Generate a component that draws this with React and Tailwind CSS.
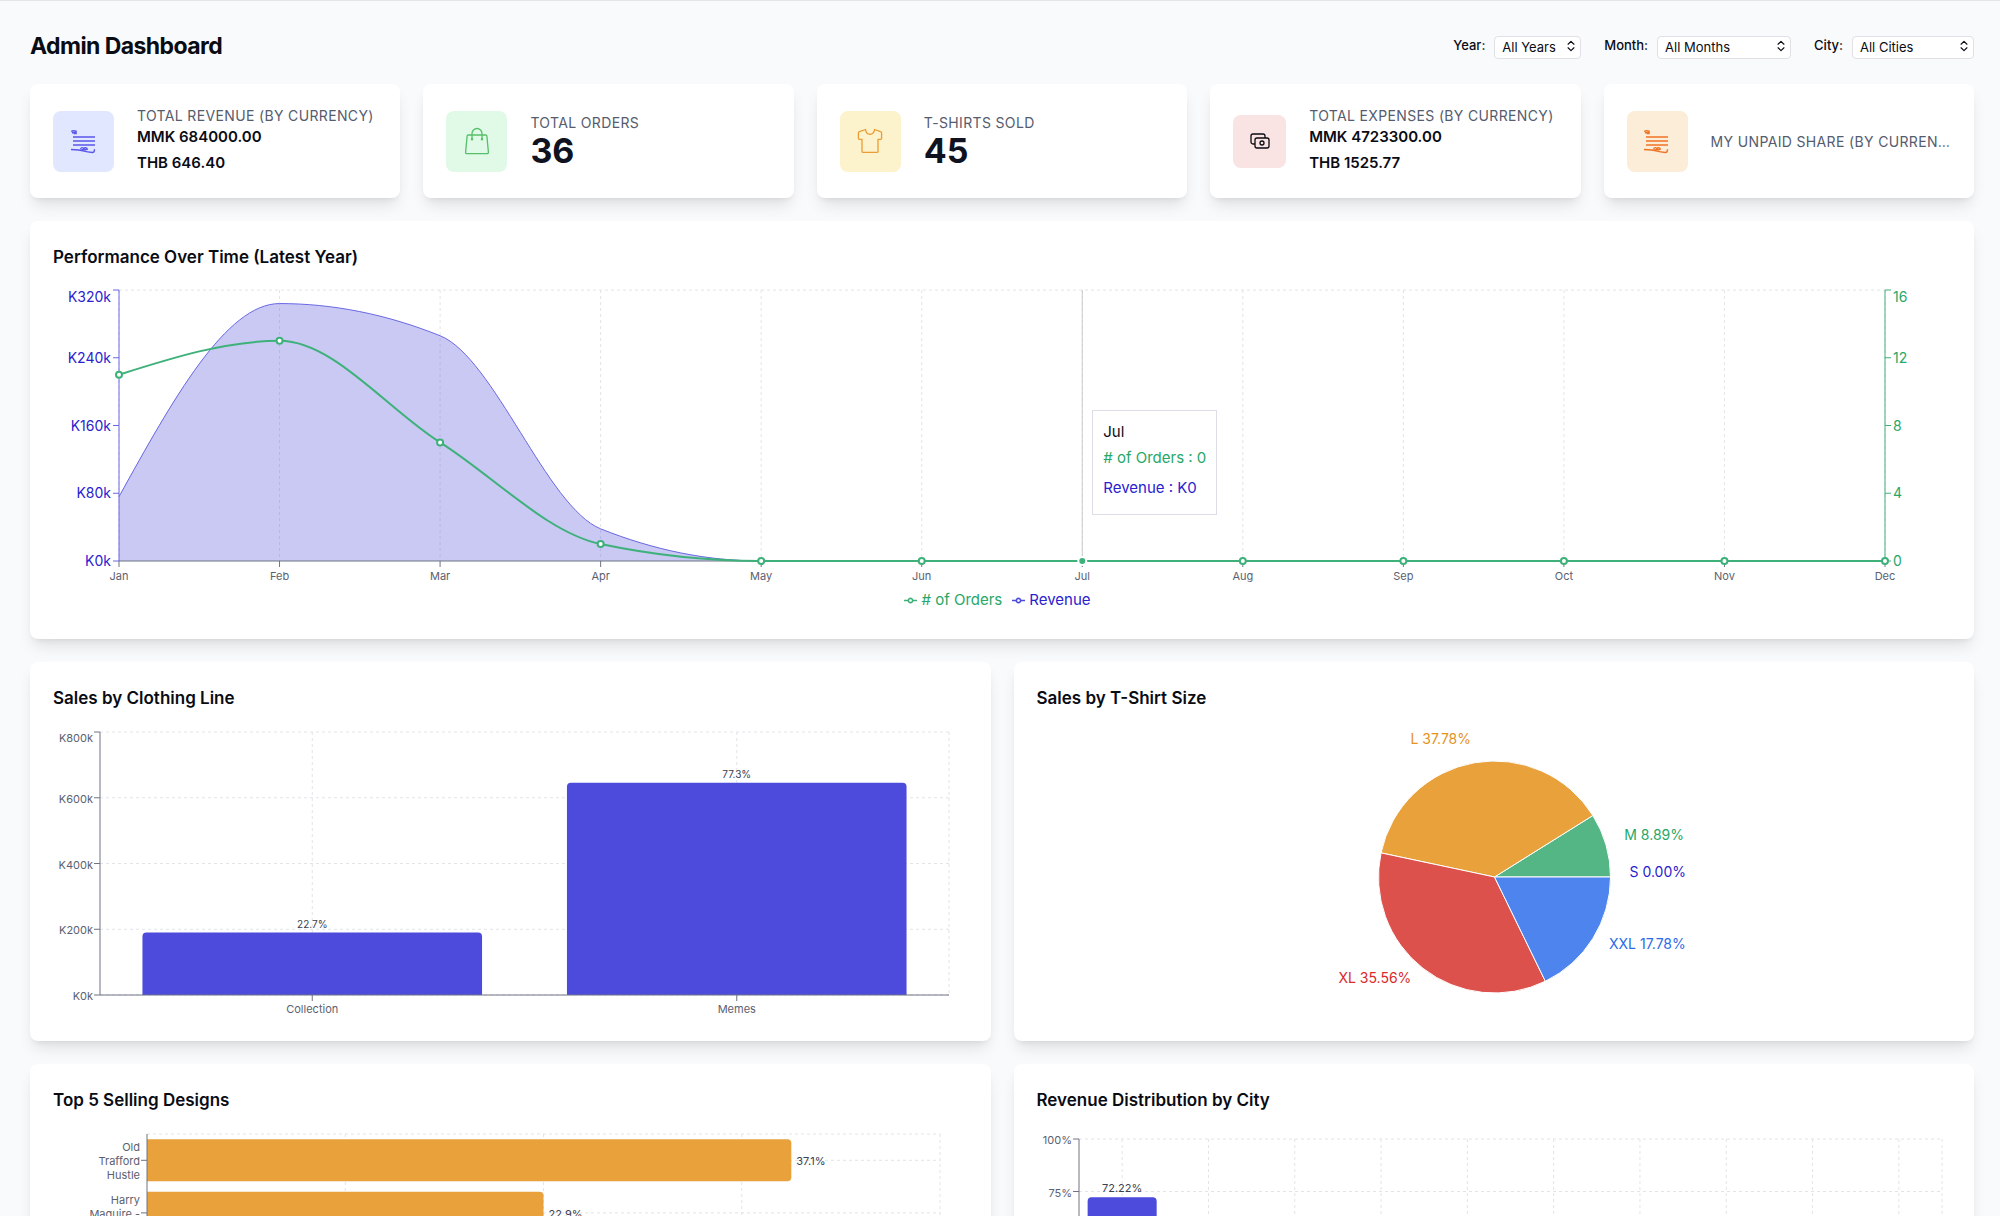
import { useLayoutEffect, useRef, useState } from "react";
import { ChevronsUpDown } from "lucide-react";

const INDIGO = "#4c4bdc";
const GREEN = "#3eb17a";
const AMBER = "#e8a13b";
const AXIS = "#6f7484";
const GRID = "#e3e4e8";

const monthly = [
  { month: "Jan", revenue: 76, orders: 11 },
  { month: "Feb", revenue: 304, orders: 13 },
  { month: "Mar", revenue: 266, orders: 7 },
  { month: "Apr", revenue: 38, orders: 1 },
  { month: "May", revenue: 0, orders: 0 },
  { month: "Jun", revenue: 0, orders: 0 },
  { month: "Jul", revenue: 0, orders: 0 },
  { month: "Aug", revenue: 0, orders: 0 },
  { month: "Sep", revenue: 0, orders: 0 },
  { month: "Oct", revenue: 0, orders: 0 },
  { month: "Nov", revenue: 0, orders: 0 },
  { month: "Dec", revenue: 0, orders: 0 },
];

const clothingLines = [
  { name: "Collection", revenue: 190, share: "22.7%" },
  { name: "Memes", revenue: 646, share: "77.3%" },
];

const sizes = [
  { name: "S", count: 0, share: "0.00%", color: INDIGO, text: "#2a22cf" },
  { name: "M", count: 4, share: "8.89%", color: "#55b685", text: "#27a768" },
  { name: "L", count: 17, share: "37.78%", color: AMBER, text: "#e6921c" },
  { name: "XL", count: 16, share: "35.56%", color: "#dc514c", text: "#d92b2b" },
  { name: "XXL", count: 8, share: "17.78%", color: "#4d84ee", text: "#2b6ce8" },
];

const designs = [
  { lines: ["Old", "Trafford", "Hustle"], sold: 13, share: "37.1%" },
  { lines: ["Harry", "Maguire -"], sold: 8, share: "22.9%" },
];

const cities = [{ percent: 72.22 }];

// Track the width of the chart container
const useWidth = () => {
  const ref = useRef(null);
  const [width, setWidth] = useState(0);

  useLayoutEffect(() => {
    const update = () => setWidth(ref.current.clientWidth);
    update();
    const observer = new ResizeObserver(update);
    observer.observe(ref.current);
    return () => observer.disconnect();
  }, []);

  return [ref, width];
};

// Monotone cubic curve through the points
const curve = (pts) => {
  const n = pts.length;
  const h = (i) => pts[i + 1][0] - pts[i][0];
  const s = (i) => (pts[i + 1][1] - pts[i][1]) / h(i);
  const m = pts.map((_, i) => {
    if (i === 0 || i === n - 1) return null;
    const s0 = s(i - 1);
    const s1 = s(i);
    const p = (s0 * h(i) + s1 * h(i - 1)) / (h(i - 1) + h(i));
    return (
      (Math.sign(s0) + Math.sign(s1)) *
        Math.min(Math.abs(s0), Math.abs(s1), 0.5 * Math.abs(p)) || 0
    );
  });
  m[0] = (3 * s(0) - m[1]) / 2;
  m[n - 1] = (3 * s(n - 2) - m[n - 2]) / 2;

  let d = `M${pts[0][0]},${pts[0][1]}`;
  for (let i = 0; i < n - 1; i++) {
    const dx = h(i) / 3;
    const [x0, y0] = pts[i];
    const [x1, y1] = pts[i + 1];
    d += `C${x0 + dx},${y0 + dx * m[i]},${x1 - dx},${y1 - dx * m[i + 1]},${x1},${y1}`;
  }
  return d;
};

const HLine = ({ x1, x2, y, color = GRID, dashed }) => (
  <line x1={x1} x2={x2} y1={y} y2={y} stroke={color} strokeDasharray={dashed ? "3 3" : undefined} />
);

const VLine = ({ x, y1, y2, color = GRID, dashed }) => (
  <line x1={x} x2={x} y1={y1} y2={y2} stroke={color} strokeDasharray={dashed ? "3 3" : undefined} />
);

const Card = ({ title, children }) => (
  <section className="min-w-0 rounded-lg bg-white p-[23px] shadow-lg">
    <h2 className="mb-[15px] text-[17px] leading-[27px] font-semibold">{title}</h2>
    {children}
  </section>
);

const LegendItem = ({ color, className, label }) => (
  <li className={`flex items-center gap-1 ${className}`}>
    <svg width="13" height="13" viewBox="0 0 32 32" fill="none" stroke={color} strokeWidth="4">
      <path d="M0,16h10.67A5.33,5.33,0,1,1,21.33,16H32M21.33,16A5.33,5.33,0,1,1,10.67,16" />
    </svg>
    {label}
  </li>
);

const PerformanceChart = () => {
  const [ref, width] = useWidth();
  const left = 66;
  const right = width - 66;
  const top = 4;
  const bottom = 275;
  const x = (i) => left + ((right - left) * i) / 11;
  const y = (v, max) => bottom - ((bottom - top) * v) / max;
  const revenuePath = curve(monthly.map((d, i) => [x(i), y(d.revenue, 320)]));
  const ordersPath = curve(monthly.map((d, i) => [x(i), y(d.orders, 16)]));
  const ticks = [0, 1, 2, 3, 4];

  return (
    <div ref={ref} className="relative">
      <svg width={width} height="298" className="block">
        <HLine x1={left} x2={right} y={top} dashed />
        {monthly.map((d, i) => (
          <VLine key={d.month} x={x(i)} y1={top} y2={bottom} dashed />
        ))}
        <path d={`${revenuePath}L${right},${bottom}L${left},${bottom}Z`} fill={INDIGO} fillOpacity="0.3" />
        <path d={revenuePath} fill="none" stroke="#6a68e4" />

        {/* Axes */}
        <HLine x1={left} x2={right} y={bottom} color={AXIS} />
        <VLine x={left} y1={top} y2={bottom} color="#6a68e4" />
        <VLine x={right} y1={top} y2={bottom} color={GREEN} />
        {ticks.map((t) => {
          const ty = y(t, 4);
          const labelY = (t === 4 ? ty + 7 : ty) + 5;
          return (
            <g key={t} className="text-[14px]">
              <HLine x1={left - 6} x2={left} y={ty} color="#6a68e4" />
              <text x={left - 8} y={labelY} textAnchor="end" fill="#2a22cf">{`K${t * 80}k`}</text>
              <HLine x1={right} x2={right + 6} y={ty} color={GREEN} />
              <text x={right + 8} y={labelY} fill="#27a768">
                {t * 4}
              </text>
            </g>
          );
        })}
        {monthly.map((d, i) => (
          <g key={d.month}>
            <VLine x={x(i)} y1={bottom} y2={bottom + 6} color={AXIS} />
            <text x={x(i)} y={bottom + 19} textAnchor="middle" fill="#5b6170" className="text-[11px]">
              {d.month}
            </text>
          </g>
        ))}

        {/* Hovered month */}
        <VLine x={x(6)} y1={top} y2={bottom} color="#cccccc" />
        <path d={ordersPath} fill="none" stroke={GREEN} strokeWidth="2" />
        {monthly.map((d, i) => (
          <circle
            key={d.month}
            cx={x(i)}
            cy={y(d.orders, 16)}
            r={i === 6 ? 4 : 3}
            fill={i === 6 ? GREEN : "#fff"}
            stroke={i === 6 ? "#fff" : GREEN}
            strokeWidth="2"
          />
        ))}
      </svg>
      <ul className="flex h-8 justify-center gap-2.5 pr-[9px] text-[15px] leading-[34px]">
        <LegendItem color={GREEN} className="text-[#27a768]" label="# of Orders" />
        <LegendItem color={INDIGO} className="text-[#2a22cf]" label="Revenue" />
      </ul>
      <div
        className="absolute top-[124px] flex h-[105px] flex-col border border-[#dcdde6] bg-white px-2.5 py-2.5 text-[15px] whitespace-nowrap"
        style={{ left: x(6) + 10 }}
      >
        <p className="leading-[22px]">Jul</p>
        <p className="leading-[30px] text-[#27a768]"># of Orders : 0</p>
        <p className="leading-[30px] text-[#2a22cf]">Revenue : K0</p>
      </div>
    </div>
  );
};

const ClothingLineChart = () => {
  const [ref, width] = useWidth();
  const left = 47;
  const right = width - 19;
  const top = 5;
  const bottom = 268;
  const band = (right - left) / 2;
  const y = (v) => bottom - ((bottom - top) * v) / 800;

  return (
    <div ref={ref}>
      <svg width={width} height="291" className="block text-[11px]">
        {[0, 200, 400, 600, 800].map((t) => (
          <g key={t}>
            <HLine x1={left} x2={right} y={y(t)} dashed />
            <HLine x1={left - 6} x2={left} y={y(t)} color={AXIS} />
            <text x={left - 7} y={y(t) + (t === 800 ? 10 : 5)} textAnchor="end" fill="#5b6170">{`K${t}k`}</text>
          </g>
        ))}
        <VLine x={right} y1={top} y2={bottom} dashed />
        {clothingLines.map((d, i) => {
          const cx = left + band * (i + 0.5);
          const w = band * 0.8;
          const h = bottom - y(d.revenue);
          return (
            <g key={d.name} textAnchor="middle">
              <VLine x={cx} y1={top} y2={bottom} dashed />
              <VLine x={cx} y1={bottom} y2={bottom + 6} color={AXIS} />
              <path
                d={`M${cx - w / 2},${bottom}v${4 - h}q0,-4,4,-4h${w - 8}q4,0,4,4v${h - 4}Z`}
                fill={INDIGO}
              />
              <text x={cx} y={y(d.revenue) - 5} fill="#3a4050" className="text-[10px]">
                {d.share}
              </text>
              <text x={cx} y={bottom + 18} fill="#5b6170">
                {d.name}
              </text>
            </g>
          );
        })}
        <VLine x={left} y1={top} y2={bottom} color={AXIS} />
        <HLine x1={left} x2={right} y={bottom} color={AXIS} />
      </svg>
    </div>
  );
};

const SizeChart = () => {
  const [ref, width] = useWidth();
  const cx = width / 2;
  const cy = 150;
  const r = 116;
  const total = sizes.reduce((sum, s) => sum + s.count, 0);
  const point = (angle, radius) => [cx + radius * Math.cos(angle), cy - radius * Math.sin(angle)];
  let angle = 0;
  const slices = sizes.map((s) => {
    const start = angle;
    angle += (s.count / total) * Math.PI * 2;
    return { ...s, start, end: angle };
  });

  return (
    <div ref={ref}>
      <svg width={width} height="291" className="block text-[14px]">
        {slices.map((s) => {
          const [x1, y1] = point(s.start, r);
          const [x2, y2] = point(s.end, r);
          const [lx, ly] = point((s.start + s.end) / 2, r + 19);
          return (
            <g key={s.name}>
              {s.count > 0 && (
                <path d={`M${cx},${cy}L${x1},${y1}A${r},${r},0,0,0,${x2},${y2}Z`} fill={s.color} stroke="#fff" />
              )}
              <text x={lx} y={ly} textAnchor={lx > cx ? "start" : "end"} fill={s.text}>
                {`${s.name} ${s.share}`}
              </text>
            </g>
          );
        })}
      </svg>
    </div>
  );
};

const DesignsChart = () => {
  const [ref, width] = useWidth();
  const left = 94;
  const right = width - 28;
  const top = 5;
  const bottom = 268;
  const band = (bottom - top) / 5;

  return (
    <div ref={ref}>
      <svg width={width} height="291" className="block text-[11px]">
        <HLine x1={left} x2={right} y={top} dashed />
        {[1, 2, 3, 4].map((t) => (
          <VLine key={t} x={left + ((right - left) * t) / 4} y1={top} y2={bottom} dashed />
        ))}
        {designs.map((d, i) => {
          const cy = top + band * (i + 0.5);
          const h = band * 0.8;
          const w = ((right - left) * d.sold) / 16;
          return (
            <g key={d.share}>
              <HLine x1={left} x2={right} y={cy} dashed />
              <HLine x1={left - 6} x2={left} y={cy} color={AXIS} />
              <path
                d={`M${left},${cy - h / 2}h${w - 4}q4,0,4,4v${h - 8}q0,4,-4,4h${4 - w}Z`}
                fill={AMBER}
              />
              <text x={left + w + 5} y={cy + 5} fill="#3a4050">
                {d.share}
              </text>
              {d.lines.map((line, n) => (
                <text key={line} x={left - 7} y={cy + 5 + (n - 1) * 14} textAnchor="end" fill="#5b6170">
                  {line}
                </text>
              ))}
            </g>
          );
        })}
        <VLine x={left} y1={top} y2={bottom} color={AXIS} />
      </svg>
    </div>
  );
};

const CityChart = () => {
  const [ref, width] = useWidth();
  const left = 42;
  const right = width - 10;
  const top = 10;
  const bottom = 220;
  const band = (right - left) / 10;
  const y = (v) => bottom - ((bottom - top) * v) / 100;

  return (
    <div ref={ref}>
      <svg width={width} height="291" className="block text-[11px]">
        {[0, 25, 50, 75, 100].map((t) => (
          <g key={t}>
            <HLine x1={left} x2={right} y={y(t)} dashed />
            <HLine x1={left - 6} x2={left} y={y(t)} color={AXIS} />
            <text x={left - 7} y={y(t) + 5} textAnchor="end" fill="#5b6170">{`${t}%`}</text>
          </g>
        ))}
        {[0, 1, 2, 3, 4, 5, 6, 7, 8, 9].map((i) => (
          <VLine key={i} x={left + band * (i + 0.5)} y1={top} y2={bottom} dashed />
        ))}
        <VLine x={right} y1={top} y2={bottom} dashed />
        {cities.map((c, i) => {
          const cx = left + band * (i + 0.5);
          const w = band * 0.8;
          const h = bottom - y(c.percent);
          return (
            <g key={c.percent}>
              <path
                d={`M${cx - w / 2},${bottom}v${4 - h}q0,-4,4,-4h${w - 8}q4,0,4,4v${h - 4}Z`}
                fill={INDIGO}
              />
              <text x={cx} y={y(c.percent) - 5} textAnchor="middle" fill="#3a4050">
                {`${c.percent}%`}
              </text>
            </g>
          );
        })}
        <VLine x={left} y1={top} y2={bottom} color={AXIS} />
        <HLine x1={left} x2={right} y={bottom} color={AXIS} />
      </svg>
    </div>
  );
};

const ScrollIcon = () => (
  <svg width="26" height="26" viewBox="0 0 26 26" fill="none" stroke="currentColor" strokeWidth="1.4">
    <path d="M2 9h22M2 13h22M2 17h22" />
    <path d="M.2 3.6C1.500 2.600 3.500 2.600 5 3.200v3M1 4.800h2.600v1.400" strokeWidth="1.600" />
    <path d="M0 21.500c6 .2 9 .4 13 1.600 3 .9 5 1.100 8.500 1.400 1.600 0 2-1 2-3.200" />
    <path d="M9.500 21.500c.3-2.400 3-2.400 3.200-.4.400-2 3.400-2 3.800.8M10.500 21.800h5" />
  </svg>
);

const BagIcon = () => (
  <svg width="26" height="28" viewBox="0 0 26 28" fill="none" stroke="currentColor" strokeWidth="1.3" strokeLinejoin="round">
    <path d="M4.300 8h17.400a1.200 1.200 0 0 1 1.200 1.100l1.500 16.200a1.200 1.200 0 0 1-1.200 1.300H2.800a1.200 1.200 0 0 1-1.200-1.300L3.100 9.100A1.200 1.200 0 0 1 4.300 8zM8 12V6.500a5 5 0 0 1 10 0V12" />
    <circle cx="8" cy="12.300" r=".6" fill="currentColor" />
    <circle cx="18" cy="12.300" r=".6" fill="currentColor" />
  </svg>
);

const ShirtIcon = () => (
  <svg width="26" height="26" viewBox="0 0 26 26" fill="none" stroke="currentColor" strokeWidth="1.3" strokeLinejoin="round">
    <path d="M8.500 1.500 2.500 3.600A1.500 1.500 0 0 0 1.400 5v5.300c0 .7.400 1.100 1 1.100H5v11.800c0 .8.400 1.200 1.200 1.200h13.600c.8 0 1.200-.4 1.200-1.200V11.400h2.600c.6 0 1-.4 1-1.100V5a1.500 1.500 0 0 0-1.100-1.400l-6-2.100c-.6 6.300-8.400 6.300-9 0z" />
  </svg>
);

const CashIcon = () => (
  <svg width="20" height="16" viewBox="0 0 20 16" fill="none" stroke="currentColor" strokeWidth="1.3" strokeLinejoin="round">
    <rect x="5" y="5" width="14" height="10" rx="2" />
    <path d="M5 11H3a2 2 0 0 1-2-2V3a2 2 0 0 1 2-2h10a2 2 0 0 1 2 2v2" />
    <circle cx="12" cy="10" r="2" />
  </svg>
);

const StatCard = ({ icon, iconClass, label, value, amounts }) => (
  <div className="flex h-[114px] min-w-0 items-center gap-[23px] rounded-lg bg-white px-[23px] shadow-lg">
    <div className={`flex shrink-0 items-center justify-center rounded-lg ${iconClass}`}>{icon}</div>
    <div className="min-w-0">
      <p className="truncate text-[14px] leading-[19px] tracking-wide text-[#555c6e] uppercase">{label}</p>
      {value && <p className="text-[34px] leading-[38px] font-bold text-[#10131f]">{value}</p>}
      {amounts && (
        <ul className="text-[15px] leading-[23px] font-semibold">
          {amounts.map((a) => (
            <li key={a} className="mb-[3px]">
              {a}
            </li>
          ))}
        </ul>
      )}
    </div>
  </div>
);

const Filter = ({ id, label, option, className }) => (
  <div className="flex items-center gap-[9px]">
    <label htmlFor={id} className="text-[13px] font-medium">
      {label}
    </label>
    <div className="relative">
      <select
        id={id}
        className={`h-[23px] appearance-none rounded border border-[#dfe1e6] bg-white pl-[7px] text-[13px] leading-[19px] ${className}`}
      >
        <option>{option}</option>
      </select>
      <ChevronsUpDown className="pointer-events-none absolute top-[5px] right-[3px] h-3.5 w-3.5" />
    </div>
  </div>
);

const App = () => {
  return (
    <div className="h-screen overflow-y-auto border-t border-[#e3e5e8] bg-[#f9fafc] pr-[26px] pb-[30px] pl-[30px] font-['Inter',sans-serif] text-[#0a0c14] [scrollbar-width:none]">
      {/* HEADER */}
      <header className="flex h-[83px] items-center justify-between pt-[7px]">
        <h1 className="text-[23px] leading-[30px] font-bold tracking-tight">Admin Dashboard</h1>
        <div className="flex gap-[23px]">
          <Filter id="year" label="Year:" option="All Years" className="w-[87px]" />
          <Filter id="month" label="Month:" option="All Months" className="w-[134px]" />
          <Filter id="city" label="City:" option="All Cities" className="w-[122px]" />
        </div>
      </header>

      <main className="flex flex-col gap-[23px]">
        {/* STATS */}
        <div className="grid grid-cols-5 gap-[23px]">
          <StatCard
            icon={<ScrollIcon />}
            iconClass="h-[61px] w-[61px] bg-[#e1e7fe] text-[#5a57ea]"
            label="Total Revenue (by currency)"
            amounts={["MMK 684000.00", "THB 646.40"]}
          />
          <StatCard
            icon={<BagIcon />}
            iconClass="h-[61px] w-[61px] bg-[#e1fae7] text-[#56bf68]"
            label="Total Orders"
            value="36"
          />
          <StatCard
            icon={<ShirtIcon />}
            iconClass="h-[61px] w-[61px] bg-[#fcf2cb] text-[#eb9c33]"
            label="T-Shirts Sold"
            value="45"
          />
          <StatCard
            icon={<CashIcon />}
            iconClass="h-[53px] w-[53px] bg-[#f9e3e3]"
            label="Total Expenses (by currency)"
            amounts={["MMK 4723300.00", "THB 1525.77"]}
          />
          <StatCard
            icon={<ScrollIcon />}
            iconClass="h-[61px] w-[61px] bg-[#fcedd8] text-[#ee7326]"
            label="My Unpaid Share (by currency)"
          />
        </div>

        {/* CHARTS */}
        <Card title="Performance Over Time (Latest Year)">
          <PerformanceChart />
        </Card>
        <div className="grid grid-cols-2 gap-[23px]">
          <Card title="Sales by Clothing Line">
            <ClothingLineChart />
          </Card>
          <Card title="Sales by T-Shirt Size">
            <SizeChart />
          </Card>
          <Card title="Top 5 Selling Designs">
            <DesignsChart />
          </Card>
          <Card title="Revenue Distribution by City">
            <CityChart />
          </Card>
        </div>
      </main>
    </div>
  );
};

export default App;
